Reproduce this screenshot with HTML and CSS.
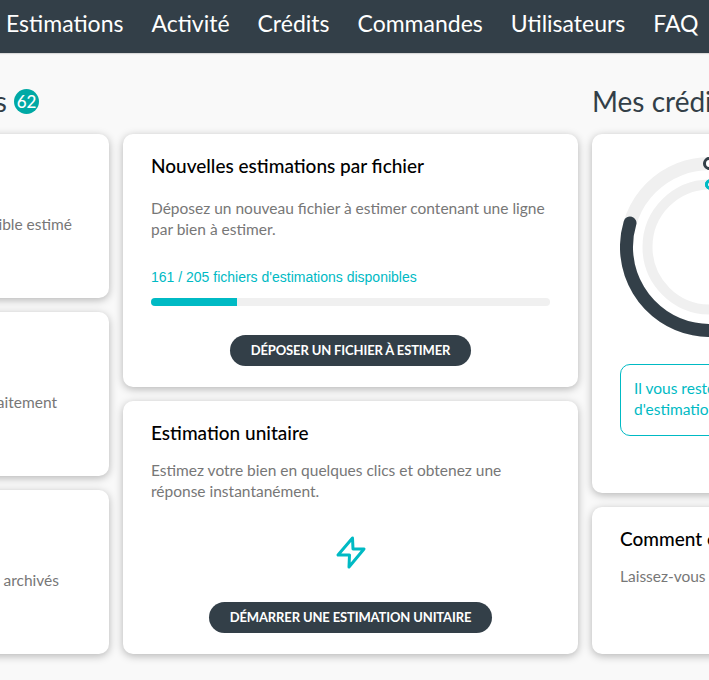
FILE: index.html
```html
<!DOCTYPE html>
<html lang="fr">
<head>
<meta charset="utf-8">
<title>Estimations</title>
<link rel="stylesheet" href="styles.css">
</head>
<body>
<header class="topbar">
  <nav class="nav">
    <a>Estimations</a><a>Activité</a><a>Crédits</a><a>Commandes</a><a>Utilisateurs</a><a>FAQ</a>
  </nav>
</header>
<main class="layout">
  <section class="col col-left">
    <h2 class="heading heading-left">Mes estimations <span class="badge">62</span></h2>
    <div class="stack">
      <div class="card stat stat-a"><p>Biens au prix de vente cible estimé</p></div>
      <div class="card stat stat-b"><p>Estimations en cours de traitement</p></div>
      <div class="card stat stat-c"><p>Fichiers archivés</p></div>
    </div>
  </section>
  <section class="col col-mid">
    <div class="heading-spacer"></div>
    <div class="stack">
      <div class="card action">
        <h3>Nouvelles estimations par fichier</h3>
        <p class="desc">Déposez un nouveau fichier à estimer contenant une ligne par bien à estimer.</p>
        <p class="quota">161 / 205 fichiers d'estimations disponibles</p>
        <div class="bar"><div class="bar-fill"></div></div>
        <div class="cta"><button class="btn">DÉPOSER UN FICHIER À ESTIMER</button></div>
      </div>
      <div class="card action">
        <h3>Estimation unitaire</h3>
        <p class="desc">Estimez votre bien en quelques clics et obtenez une réponse instantanément.</p>
        <div class="bolt">
          <svg width="32" height="36" viewBox="0 0 32 36"><polygon points="17.5,3 3,20 14.5,20 14,32 29,14 18,14" fill="none" stroke="#00bac4" stroke-width="3" stroke-linejoin="round"/></svg>
        </div>
        <div class="cta"><button class="btn">DÉMARRER UNE ESTIMATION UNITAIRE</button></div>
      </div>
    </div>
  </section>
  <section class="col col-right">
    <h2 class="heading">Mes crédits</h2>
    <div class="stack">
      <div class="card credits">
        <svg class="ring" width="180" height="180" viewBox="0 0 180 180">
          <circle cx="90" cy="90" r="83.5" fill="none" stroke="#f0f0f0" stroke-width="13"/>
          <circle cx="90" cy="90" r="62.5" fill="none" stroke="#f0f0f0" stroke-width="10"/>
          <path d="M90 6.5A83.5 83.5 0 1 1 10 66" fill="none" stroke="#333f48" stroke-width="13" stroke-linecap="round"/>
          <path d="M90 27.5A62.5 62.5 0 0 1 130 42" fill="none" stroke="#00bac4" stroke-width="10" stroke-linecap="round"/>
          <circle cx="89.5" cy="6.5" r="5" fill="#fff" stroke="#333f48" stroke-width="3"/>
          <circle cx="90" cy="27.5" r="3.5" fill="#fff" stroke="#00bac4" stroke-width="3"/>
        </svg>
        <div class="notice">Il vous reste 44 fichiers<br>d'estimation disponibles</div>
      </div>
      <div class="card help">
        <h3>Comment ça marche ?</h3>
        <p class="desc">Laissez-vous guider</p>
      </div>
    </div>
  </section>
</main>
</body>
</html>
```
FILE: styles.css
```css
html, body {
  margin: 0;
  height: 680px;
  overflow: hidden;
  background: #f9f9f9;
  font-family: "Lato", "Liberation Sans", sans-serif;
}
.topbar {
  background: #333f48;
  height: 53px;
  box-shadow: 0 1px 1px rgba(0,0,0,.12);
}
.nav {
  display: flex;
  gap: 28px;
  padding-left: 6px;
  height: 100%;
  align-items: center;
  padding-bottom: 7px;
  box-sizing: border-box;
}
.nav a {
  color: #fff;
  font-size: 23px;
  white-space: nowrap;
}
.layout {
  display: grid;
  grid-template-columns: 300px 455px 236px;
  gap: 14px;
  margin-left: -191px;
  width: 1019px;
  padding-top: 34px;
}
.heading {
  margin: 0 0 18px;
  height: 29px;
  font-size: 28px;
  line-height: 29px;
  font-weight: 400;
  color: #333f48;
  white-space: nowrap;
}
.heading-left {
  display: flex;
  justify-content: flex-end;
  align-items: center;
  gap: 7px;
  padding-right: 70px;
}
.heading-spacer {
  height: 47px;
}
.badge {
  flex: none;
  width: 25px;
  height: 25px;
  border-radius: 50%;
  background: #00a9a5;
  color: #fff;
  font-size: 17px;
  font-weight: 500;
  line-height: 25px;
  text-align: center;
}
.stack {
  display: flex;
  flex-direction: column;
  gap: 14px;
  height: 520px;
}
.card {
  background: #fff;
  border-radius: 10px;
  box-shadow: 0 2px 8px rgba(0,0,0,.28);
  box-sizing: border-box;
  flex: 1 1 0;
  min-height: 0;
}
.stat {
  display: flex;
  align-items: center;
  justify-content: flex-end;
  padding-top: 16px;
}
.stat p {
  margin: 0;
  font-size: 15.5px;
  color: #777;
  white-space: nowrap;
}
.stat-a { padding-right: 37px; }
.stat-b { padding-right: 52px; }
.stat-c { padding-right: 50px; }
.action {
  padding: 21px 28px 21px;
  display: flex;
  flex-direction: column;
}
h3 {
  margin: 0;
  font-size: 19px;
  line-height: 22px;
  font-weight: 500;
  color: #000;
  white-space: nowrap;
}
.desc {
  margin: 21px 0 0;
  font-size: 15.5px;
  line-height: 21px;
  color: #777;
}
.action:nth-child(2) .desc { margin-top: 16px; }
.quota {
  margin: 28px 0 0;
  font-family: "Liberation Sans", sans-serif;
  font-size: 14px;
  line-height: 18px;
  color: #00bac4;
}
.bar {
  margin-top: 12px;
  height: 8px;
  border-radius: 4px;
  background: #f0f0f0;
  overflow: hidden;
}
.bar-fill {
  width: 86px;
  height: 100%;
  background: #00bac4;
}
.cta {
  margin-top: auto;
  display: flex;
  justify-content: center;
}
.btn {
  height: 31px;
  padding: 0 21px 2px;
  border: 0;
  border-radius: 16px;
  background: #333f48;
  color: #fff;
  font-family: inherit;
  font-size: 13px;
  font-weight: 700;
  letter-spacing: -.13px;
  white-space: nowrap;
}
.bolt {
  margin-top: 33px;
  display: flex;
  justify-content: center;
}
.credits {
  flex: 0 0 359px;
  padding: 23px 28px 0;
}
.ring {
  display: block;
}
.notice {
  margin-top: 27px;
  height: 72px;
  box-sizing: border-box;
  border: 1px solid #00bac4;
  border-radius: 10px;
  padding: 13px 13px;
  font-size: 15.5px;
  line-height: 21px;
  color: #00bac4;
  white-space: nowrap;
}
.help {
  padding: 21px 28px;
}
.help .desc { margin-top: 16px; white-space: nowrap; }
```
